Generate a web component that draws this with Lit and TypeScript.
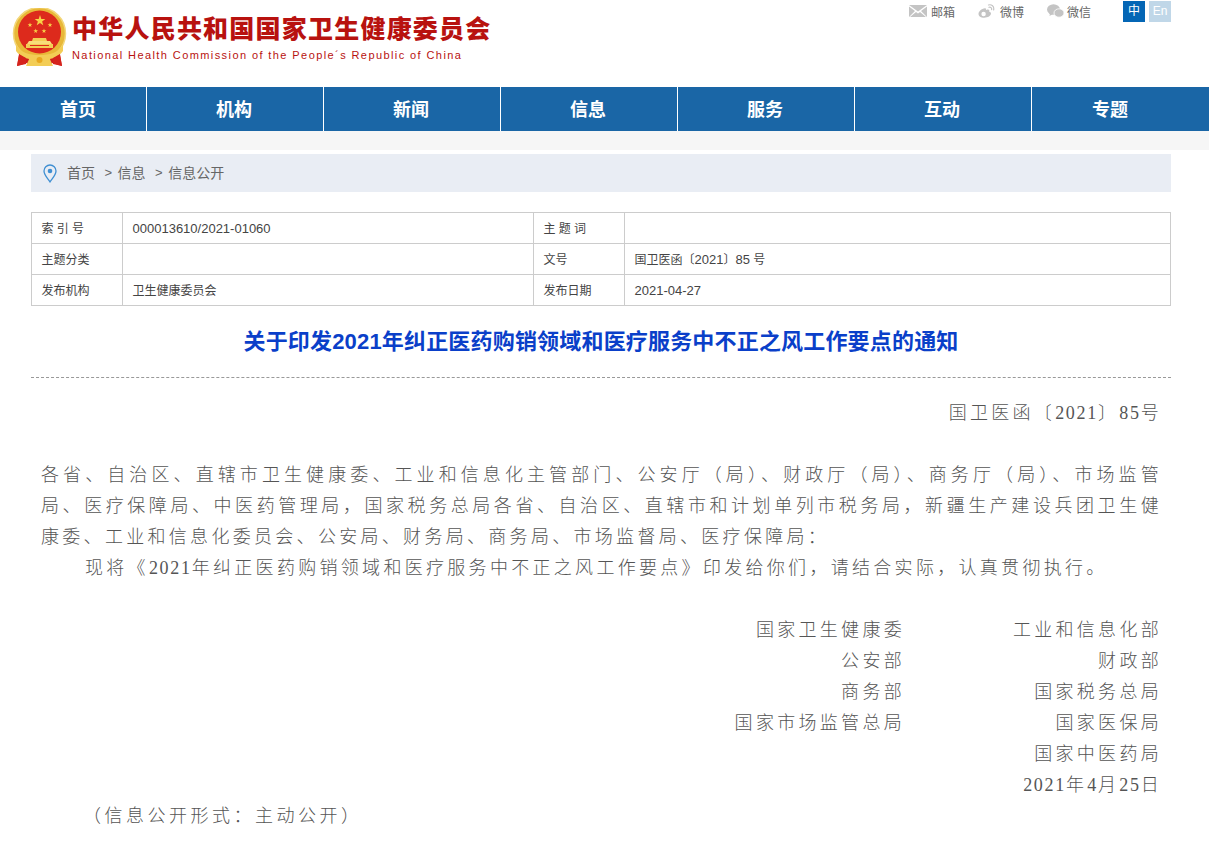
import { LitElement, html, css, svg } from "lit";
import { customElement } from "lit/decorators.js";

const star = (cx: number, cy: number, r: number) => {
  const pts: string[] = [];
  for (let i = 0; i < 10; i++) {
    const a = -Math.PI / 2 + (i * Math.PI) / 5;
    const rr = i % 2 ? r * 0.4 : r;
    pts.push(`${(cx + rr * Math.cos(a)).toFixed(2)},${(cy + rr * Math.sin(a)).toFixed(2)}`);
  }
  return svg`<polygon points=${pts.join(" ")} fill="#f8d247"/>`;
};

const NAV = ["首页", "机构", "新闻", "信息", "服务", "互动", "专题"];

@customElement("app-root")
export class AppRoot extends LitElement {
  static styles = css`
    :host {
      display: block;
      width: 1209px;
      height: 847px;
      overflow: hidden;
      background: #fff;
      font-family: "Liberation Sans", "Noto Sans CJK SC", sans-serif;
    }
    .top { height: 87px; display: flex; justify-content: space-between; }
    .brand { display: flex; align-items: flex-start; padding: 8px 0 0 12px; gap: 5px; }
    .emblem { width: 55px; height: 59px; display: block; }
    .brand-text { display: flex; flex-direction: column; }
    .cn {
      font-size: 25px; line-height: 36px; font-weight: 900; color: #b8120f;
      letter-spacing: 1.22px; white-space: nowrap; padding-top: 3px;
    }
    .en {
      font-size: 11px; line-height: 14px; color: #b8120f; letter-spacing: 1.41px;
      white-space: nowrap; padding-top: 1px;
    }
    .tools { display: flex; align-items: flex-start; padding: 0 38px 0 0; }
    .tool { display: flex; align-items: center; height: 22px; font-size: 12px; color: #666; margin-right: 23px; gap: 5px; }
    .tool svg { display: block; }
    .tool.mail { gap: 4px; margin-right: 23px; }
    .tool.last { margin-right: 32px; gap: 3px; }
    .lang { display: block; width: 22px; height: 21px; line-height: 21px; text-align: center; font-size: 12px; color: #fff; background: #0466b5; margin-top: 1px; }
    .lang.en-l { background: #c0d7e8; margin-left: 4px; }
    nav { display: flex; height: 44px; background: #1a66a6; }
    nav a {
      flex: 0 0 176px; box-sizing: content-box; border-right: 1px solid #fff; text-align: center;
      font-size: 18px; font-weight: 700; line-height: 47px; color: #fff;
    }
    nav a span { position: relative; left: -1px; }
    nav a:first-child { flex-basis: 136px; padding-left: 10px; }
    nav a:first-child span { left: 0; }
    nav a:last-child { flex-basis: 158px; border-right: 0; }
    .band { height: 19px; background: #f6f6f6; }
    .main { padding: 4px 38px 0 31px; }
    .crumb {
      height: 38px; background: #e9edf4; display: flex; align-items: center;
      padding-left: 12px; font-size: 14px; color: #666; white-space: nowrap; line-height: 36px;
    }
    .crumb svg { margin-right: 10px; display: block; }
    .crumb i { font-style: normal; margin: 0 5.5px 0 9.5px; font-size: 13px; }
    table {
      margin-top: 20px; width: 1140px; border-collapse: collapse; table-layout: fixed;
      font-size: 12px; color: #444;
    }
    td { border: 1px solid #ccc; height: 28px; padding: 2px 0 0 9.5px; box-sizing: content-box; line-height: 28px; overflow: hidden; }
    td.sp { letter-spacing: 3.2px; }
    td b { font-weight: 400; font-size: 13px; line-height: 0; }
    h1 {
      margin: 0; height: 71px; line-height: 71px; text-align: center; font-size: 22px; font-weight: 700;
      color: #0a3fc9; letter-spacing: 0.18px; border-bottom: 1px dashed #999; box-sizing: content-box;
    }
    .body {
      font-family: "Liberation Serif", "Noto Sans CJK SC", serif; font-weight: 300; font-size: 18px;
      line-height: 31px; color: #555; letter-spacing: 3.3px; padding: 20px 9px 0 10px;
    }
    .body p { margin: 0; }
    .body b { font-weight: 400; letter-spacing: 1.7px; }
    .ref { text-align: right; padding-bottom: 31px; }
    .lead { text-indent: 44px; padding-bottom: 31px; }
    .just { text-align: justify; }
    .sign { display: grid; grid-template-columns: 864px 1fr; text-align: right; }
    .foot { padding-left: 42px; letter-spacing: 3.5px; }
  `;

  render() {
    return html`
      <header class="top">
        <div class="brand">
          <svg class="emblem" viewBox="0 0 55 59">
            <path d="M8 42 L5 58 L15 55 L18 58 H37 L40 55 L50 58 L47 42 Z" fill="#cf1f1a"/>
            <circle cx="27.5" cy="25.5" r="26" fill="#e8b838" stroke="#f3d77a" stroke-width="1.5"/>
            <circle cx="27.5" cy="24" r="21.5" fill="#dd2a1c"/>
            ${star(28, 12.7, 5.6)} ${star(18, 17, 2.5)} ${star(38, 17, 2.5)}
            ${star(23.7, 23, 2.5)} ${star(32, 23, 2.5)}
            <path d="M21 30 h13 l1 3 h-15 Z" fill="#f3cd55"/>
            <path d="M17 33 h21 l2 3 h-25 Z" fill="#f8dc7a"/>
            <rect x="14" y="36" width="27" height="4" fill="#f3cd55"/>
            <rect x="18" y="37" width="19" height="1" fill="#dd2a1c"/>
            <path d="M4 36 C8 45 18 47 27.5 47 C37 47 47 45 51 36 L51 43 C46 50 37 52 27.5 52 C18 52 9 50 4 43 Z" fill="#f3cd55"/>
            <path d="M18 49 H37 L41 58 H14 Z" fill="#f3cd55"/>
            <circle cx="27.5" cy="52" r="3" fill="#e8a820"/>
            <path d="M7 46 L14 50 L14 56 L5 58 Z M48 46 L41 50 L41 56 L50 58 Z" fill="#d5231c"/>
          </svg>
          <div class="brand-text">
            <div class="cn">中华人民共和国国家卫生健康委员会</div>
            <div class="en">National Health Commission of the People´s Republic of China</div>
          </div>
        </div>
        <div class="tools">
          <div class="tool mail">
            <svg width="18" height="12" viewBox="0 0 18 12"><path d="M0 0 L9 6.5 L18 0 Z M0 1.6 V12 L6 6 Z M18 1.6 V12 L12 6 Z M1 12 L7 7 L9 8.5 L11 7 L17 12 Z" fill="#c4c4c4"/></svg>
            <span>邮箱</span>
          </div>
          <div class="tool">
            <svg width="17" height="14" viewBox="0 0 17 14"><path d="M7 4.2 C3.5 4.4 0.5 7.5 0.5 10 C0.5 12.4 3 13.8 6.2 13.8 C10 13.8 13 11.8 13 9.6 C13 8.4 12 7.9 11.2 7.7 C11.6 6.6 11.4 5.4 9.8 5.5 C9 5.5 8.2 5.9 8 6 C8.2 4.8 8 4.1 7 4.2 Z" fill="#c4c4c4"/><circle cx="5.6" cy="10" r="2.2" fill="#fff"/><path d="M10.5 1 C13.5 0 16.5 2.5 15.6 6 M11 3.3 C12.5 2.8 14 4 13.6 5.6" stroke="#c4c4c4" stroke-width="1.2" fill="none" stroke-linecap="round"/></svg>
            <span>微博</span>
          </div>
          <div class="tool last">
            <svg width="17" height="14" viewBox="0 0 17 14"><ellipse cx="6.5" cy="5.5" rx="6.5" ry="5.2" fill="#c4c4c4"/><path d="M3 9 L2.5 12 L6 10 Z" fill="#c4c4c4"/><ellipse cx="12" cy="9" rx="5" ry="4.2" fill="#c4c4c4" stroke="#fff" stroke-width="0.8"/></svg>
            <span>微信</span>
          </div>
          <a class="lang">中</a><a class="lang en-l">En</a>
        </div>
      </header>
      <nav>${NAV.map((n) => html`<a><span>${n}</span></a>`)}</nav>
      <div class="band"></div>
      <div class="main">
        <div class="crumb">
          <svg width="14" height="19" viewBox="0 0 14 19"><path d="M7 18 C3.5 13 1 10.5 1 7 A6 6 0 0 1 13 7 C13 10.5 10.5 13 7 18 Z" fill="none" stroke="#3f8fd2" stroke-width="1.3"/><circle cx="7" cy="7" r="2.3" fill="#3f8fd2"/></svg>
          <span>首页</span><i>&gt;</i><span>信息</span><i>&gt;</i><span>信息公开</span>
        </div>
        <table>
          <colgroup><col style="width:91px" /><col style="width:411px" /><col style="width:91px" /><col /></colgroup>
          <tr><td class="sp">索引号</td><td><b>000013610/2021-01060</b></td><td class="sp">主题词</td><td></td></tr>
          <tr><td>主题分类</td><td></td><td>文号</td><td>国卫医函〔<b>2021</b>〕<b>85</b> 号</td></tr>
          <tr><td>发布机构</td><td>卫生健康委员会</td><td>发布日期</td><td><b>2021-04-27</b></td></tr>
        </table>
        <h1>关于印发2021年纠正医药购销领域和医疗服务中不正之风工作要点的通知</h1>
        <div class="body">
          <p class="ref">国卫医函〔<b>2021</b>〕<b>85</b>号</p>
          <p class="just">各省、自治区、直辖市卫生健康委、工业和信息化主管部门、公安厅（局）、财政厅（局）、商务厅（局）、市场监管局、医疗保障局、中医药管理局，国家税务总局各省、自治区、直辖市和计划单列市税务局，新疆生产建设兵团卫生健康委、工业和信息化委员会、公安局、财务局、商务局、市场监督局、医疗保障局：</p>
          <p class="lead">现将《<b>2021</b>年纠正医药购销领域和医疗服务中不正之风工作要点》印发给你们，请结合实际，认真贯彻执行。</p>
          <div class="sign">
            <div>国家卫生健康委</div><div>工业和信息化部</div>
            <div>公安部</div><div>财政部</div>
            <div>商务部</div><div>国家税务总局</div>
            <div>国家市场监管总局</div><div>国家医保局</div>
            <div></div><div>国家中医药局</div>
            <div></div><div><b>2021</b>年<b>4</b>月<b>25</b>日</div>
          </div>
          <p class="foot">（信息公开形式：主动公开）</p>
        </div>
      </div>
    `;
  }
}
